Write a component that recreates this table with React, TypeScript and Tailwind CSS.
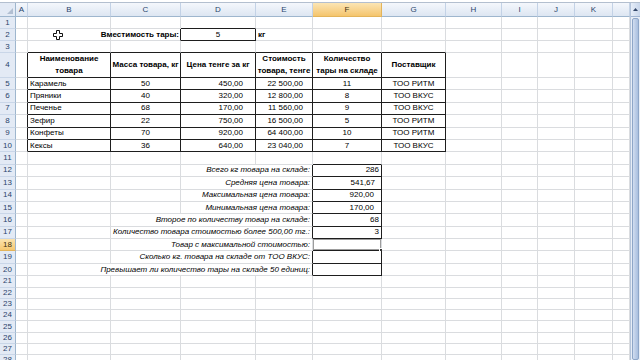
import React from "react";

type Spec = { c: number; span?: number; text?: React.ReactNode; cls?: string; wrap?: boolean };

const letters = ["A", "B", "C", "D", "E", "F", "G", "H", "I", "J", "K", ""];

const goods = [
  ["Карамель", "50", "450,00", "22 500,00", "11", "ТОО РИТМ"],
  ["Пряники", "40", "320,00", "12 800,00", "8", "ТОО ВКУС"],
  ["Печенье", "68", "170,00", "11 560,00", "9", "ТОО ВКУС"],
  ["Зефир", "22", "750,00", "16 500,00", "5", "ТОО РИТМ"],
  ["Конфеты", "70", "920,00", "64 400,00", "10", "ТОО РИТМ"],
  ["Кексы", "36", "640,00", "23 040,00", "7", "ТОО ВКУС"],
];

const stats: [number, number, string, string, string][] = [
  [12, 4, "Всего кг товара на складе:", "286", "pr-[2px]"],
  [13, 4, "Средняя цена товара:", "541,67", "pr-[6px]"],
  [14, 4, "Максимальная цена товара:", "920,00", "pr-[7px]"],
  [15, 4, "Минимальная цена товара:", "170,00", "pr-[7px]"],
  [16, 3, "Второе по количеству товар на складе:", "68", "pr-[2px]"],
  [17, 3, "Количество товара стоимостью более 500,00 тг.:", "3", "pr-[2px]"],
  [18, 3, "Товар с максимальной стоимостью:", "", ""],
  [19, 3, "Сколько кг. товара на складе от ТОО ВКУС:", "", ""],
  [20, 2, "Превышает ли количество тары на складе 50 единиц:", "", ""],
];

// cells with a drawn border (row, column index: A = 1)
function boxed(r: number, c: number) {
  if (r >= 4 && r <= 10 && c >= 2 && c <= 7) return true;
  if (r === 2 && c === 4) return true;
  if (r >= 12 && r <= 20 && c === 6 && r !== 18) return true;
  return false;
}

function Cursor() {
  return (
    <svg width="10" height="10" viewBox="0 0 10 10">
      <path
        d="M3.5 0.5h3v3h3v3h-3v3h-3v-3h-3v-3h3z"
        fill="#fff"
        stroke="#111"
        strokeWidth="1"
      />
    </svg>
  );
}

function buildRow(r: number): Spec[] {
  if (r === 2)
    return [
      { c: 2, text: <Cursor />, cls: "pl-[25px]" },
      { c: 3, text: "Вместимость тары:", cls: "justify-end font-bold pr-[1px]" },
      { c: 4, text: "5", cls: "justify-center" },
      { c: 5, text: "кг", cls: "font-bold pl-[2px]" },
    ];
  if (r === 4) {
    const head = [
      "Наименование товара",
      "Масса товара, кг",
      "Цена тенге за кг",
      "Стоимость товара, тенге",
      "Количество тары на складе",
      "Поставщик",
    ];
    return head.map((t, i) => ({
      c: i + 2,
      text: t,
      wrap: true,
      cls: "justify-center text-center font-bold leading-[12px] px-[1px]",
    }));
  }
  if (r >= 5 && r <= 10) {
    const g = goods[r - 5];
    return [
      { c: 2, text: g[0], cls: "pl-[2px]" },
      { c: 3, text: g[1], cls: "justify-center" },
      { c: 4, text: g[2], cls: "justify-end pr-[12px]" },
      { c: 5, text: g[3], cls: "justify-end pr-[9px]" },
      { c: 6, text: g[4], cls: "justify-center" },
      { c: 7, text: g[5], cls: "justify-center" },
    ];
  }
  const s = stats.find((x) => x[0] === r);
  if (s) {
    return [
      { c: s[1], span: 6 - s[1], text: s[2], cls: "justify-end italic pr-[2px]" },
      { c: 6, text: s[3], cls: `justify-end ${s[4]}` },
    ];
  }
  return [];
}

function Cell({ r, spec }: { r: number; spec: Spec }) {
  const span = spec.span ?? 1;
  const last = spec.c + span - 1;
  const darkR = boxed(r, last) || boxed(r, last + 1);
  let darkB = false;
  for (let c = spec.c; c <= last; c++) if (boxed(r, c) || boxed(r + 1, c)) darkB = true;
  const active = r === 18 && spec.c === 6;
  const spanCls =
    span === 4 ? "col-span-4" : span === 3 ? "col-span-3" : span === 2 ? "col-span-2" : "";
  return (
    <div
      className={`relative flex min-w-0 items-center border-r border-b ${
        spec.wrap ? "whitespace-normal" : "whitespace-nowrap"
      } ${spanCls} ${darkR ? "border-r-[#1e1e1e]" : "border-r-[#dadcdf]"} ${
        darkB ? "border-b-[#1e1e1e]" : "border-b-[#dadcdf]"
      } ${active ? "shadow-[inset_0_0_0_1px_#9c9c9c]" : ""} ${spec.cls ?? ""}`}
    >
      {spec.text}
      {active && (
        <span className="absolute -right-[2px] -bottom-[2px] h-[4px] w-[4px] border border-white bg-[#333]" />
      )}
    </div>
  );
}

function RowHead({ r }: { r: number }) {
  const on = r === 18;
  return (
    <div
      className={`flex items-center justify-center border-r border-b border-r-[#9eb6ce] text-[8px] ${
        on
          ? "border-b-[#e3b45a] bg-gradient-to-b from-[#fbe3ad] to-[#f6c870] text-[#3d3210]"
          : "border-b-[#c9d6e8] bg-[#e3eaf5] text-[#2a446b]"
      }`}
    >
      {r}
    </div>
  );
}

function Sheet() {
  const rows = Array.from({ length: 28 }, (_, i) => i + 1);
  return (
    <div className="grid w-[630px] shrink-0 content-start grid-cols-[16px_12px_83px_70px_75px_57px_69px_64px_56px_36px_37px_38px_17px] grid-rows-[14px_12px_12px_12px_25px_repeat(16,12.4px)_repeat(8,11.3px)]">
      <div className="relative border-r border-b border-[#9eb6ce] bg-[#e3eaf5]">
        <svg className="absolute right-[2px] bottom-[2px]" width="6" height="6" viewBox="0 0 6 6">
          <path d="M6 0V6H0z" fill="#b2bfd2" />
        </svg>
      </div>
      {letters.map((l, i) => (
        <div
          key={l + i}
          className={`flex items-center justify-center border-r border-b text-[8px] ${
            i === 5
              ? "border-r-[#e3b45a] border-b-[#e3b45a] bg-gradient-to-b from-[#fbe5b4] to-[#f5c56c] text-[#3d3210]"
              : "border-r-[#c3d2e6] border-b-[#9eb6ce] bg-gradient-to-b from-[#f4f7fc] to-[#dde6f2] text-[#2a446b]"
          }`}
        >
          {l}
        </div>
      ))}
      {rows.map((r) => {
        const specs = buildRow(r);
        const out: React.ReactNode[] = [<RowHead key={`h${r}`} r={r} />];
        let c = 1;
        while (c <= 12) {
          const s = specs.find((x) => x.c === c) ?? { c };
          out.push(<Cell key={`${r}-${c}`} r={r} spec={s} />);
          c += s.span ?? 1;
        }
        return out;
      })}
    </div>
  );
}

function Scrollbar() {
  return (
    <div className="flex w-[10px] flex-col border-l border-[#b5c5dc] bg-[#e8eef7]">
      <div className="flex h-[14px] items-center justify-center border-b border-[#9fb4d2] bg-gradient-to-r from-[#e6edf8] to-[#c8d6eb]">
        <svg width="5" height="3" viewBox="0 0 5 3">
          <path d="M0 3L2.5 0L5 3z" fill="#33476a" />
        </svg>
      </div>
      <div className="mx-[1px] mt-[1px] flex-1 rounded-[2px] border border-[#8ea6c8] bg-gradient-to-r from-[#d2def0] via-[#bccde7] to-[#a9bfdf]" />
    </div>
  );
}

export default function App() {
  return (
    <div className="flex h-[360px] w-[640px] flex-col overflow-hidden bg-white font-['Liberation_Sans',Arial,sans-serif] text-[8px] text-black">
      <div className="h-[3px] shrink-0 border-b border-[#b3bfcf] bg-white" />
      <div className="flex min-h-0 flex-1">
        <Sheet />
        <Scrollbar />
      </div>
    </div>
  );
}
